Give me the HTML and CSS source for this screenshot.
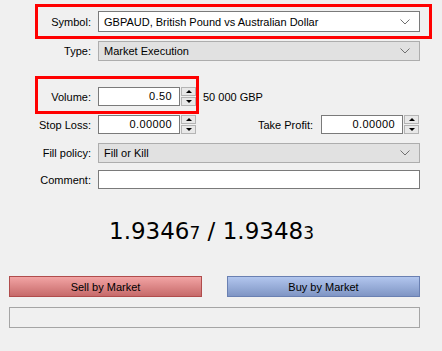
FILE: index.html
```html
<!DOCTYPE html>
<html lang="en">
<head>
  <meta charset="UTF-8" />
  <title>Order</title>
  <link rel="stylesheet" href="styles.css">
</head>
<body>

  <div class="order">
    <div class="row row-symbol mark">
      <label class="lbl">Symbol:</label>
      <div class="select white">
        <span>GBPAUD, British Pound vs Australian Dollar</span>
        <svg class="chev" width="10" height="6" viewBox="0 0 10 6"><polyline points="0.5,0.5 5,5 9.5,0.5" fill="none" stroke="#707070" stroke-width="1"/></svg>
      </div>
    </div>

    <div class="row row-type">
      <label class="lbl">Type:</label>
      <div class="select">
        <span>Market Execution</span>
        <svg class="chev" width="10" height="6" viewBox="0 0 10 6"><polyline points="0.5,0.5 5,5 9.5,0.5" fill="none" stroke="#707070" stroke-width="1"/></svg>
      </div>
    </div>

    <div class="row row-volume mark">
      <label class="lbl">Volume:</label>
      <div class="spin-field">
        <div class="num">0.50</div>
        <div class="spin"><span class="up"></span><span class="down"></span></div>
      </div>
      <span class="note">50 000 GBP</span>
    </div>

    <div class="row row-stops">
      <label class="lbl">Stop Loss:</label>
      <div class="stops">
        <div class="spin-field">
          <div class="num">0.00000</div>
          <div class="spin"><span class="up"></span><span class="down"></span></div>
        </div>
        <div class="tp">
          <label class="lbl-tp">Take Profit:</label>
          <div class="spin-field">
            <div class="num">0.00000</div>
            <div class="spin"><span class="up"></span><span class="down"></span></div>
          </div>
        </div>
      </div>
    </div>

    <div class="row row-fill">
      <label class="lbl">Fill policy:</label>
      <div class="select">
        <span>Fill or Kill</span>
        <svg class="chev" width="10" height="6" viewBox="0 0 10 6"><polyline points="0.5,0.5 5,5 9.5,0.5" fill="none" stroke="#707070" stroke-width="1"/></svg>
      </div>
    </div>

    <div class="row row-comment">
      <label class="lbl">Comment:</label>
      <div class="text-input"></div>
    </div>

    <div class="price">
      1.9346<small>7</small> / 1.9348<small>3</small>
    </div>

    <div class="actions">
      <button class="btn sell">Sell by Market</button>
      <button class="btn buy">Buy by Market</button>
    </div>

    <div class="status"></div>
  </div>

</body>
</html>
```

FILE: styles.css
```css
body {
  margin: 0;
  background: #f0f0f0;
  font-family: 'Liberation Sans', Arial, sans-serif;
  font-size: 11px;
  color: #000;
}

.order {
  padding: 11px 22px 0 9px;
}

.row {
  display: grid;
  grid-template-columns: 82px 1fr;
  column-gap: 7px;
  align-items: center;
  position: relative;
}

.lbl {
  text-align: right;
}

/* red highlight frames */
.mark::after {
  content: "";
  position: absolute;
  border: 3px solid #ff0000;
  pointer-events: none;
}

.row-symbol::after {
  left: 26px;
  right: -12px;
  top: -7px;
  bottom: -7px;
}

.row-volume::after {
  left: 26px;
  width: 158px;
  top: -11px;
  bottom: -8px;
}

.row-symbol { height: 21px; }
.row-type { height: 20px; margin-top: 9px; }
.row-volume { height: 19px; margin-top: 26px; grid-template-columns: 82px auto 1fr; }
.row-stops { height: 19px; margin-top: 9px; }
.row-fill { height: 20px; margin-top: 9px; }
.row-comment { height: 19px; margin-top: 7px; }

.select {
  box-sizing: border-box;
  height: 100%;
  display: flex;
  align-items: center;
  justify-content: space-between;
  padding: 0 9px 0 5px;
  background: #e1e1e1;
  border: 1px solid #adadad;
}

.select.white {
  background: #fff;
  border-color: #7a7a7a;
}

.chev {
  display: block;
}

.text-input {
  box-sizing: border-box;
  height: 100%;
  background: #fff;
  border: 1px solid #7a7a7a;
}

.spin-field {
  display: flex;
  height: 19px;
}

.num {
  box-sizing: border-box;
  width: 82px;
  height: 19px;
  background: #fff;
  border: 1px solid #7a7a7a;
  text-align: right;
  padding: 2px 7px 0 0;
  letter-spacing: 0.4px;
}

.spin {
  width: 15px;
  display: flex;
  flex-direction: column;
  justify-content: space-between;
  margin-left: 1px;
}

.spin span {
  box-sizing: border-box;
  height: 9px;
  background: #e8e8e8;
  border: 1px solid #b4b4b4;
  display: flex;
  align-items: center;
  justify-content: center;
}

.spin .up::before {
  content: "";
  border-left: 3px solid transparent;
  border-right: 3px solid transparent;
  border-bottom: 3px solid #000;
}

.spin .down::before {
  content: "";
  border-left: 3px solid transparent;
  border-right: 3px solid transparent;
  border-top: 3px solid #000;
}

.stops {
  display: flex;
  justify-content: space-between;
}

.tp {
  display: flex;
  align-items: center;
  gap: 8px;
  margin-right: 1px;
}

.price {
  margin-top: 29px;
  text-align: center;
  font-family: 'DejaVu Sans', sans-serif;
  font-size: 23px;
  line-height: 26px;
  padding-right: 6px;
}

.price small {
  font-size: 17px;
}

.actions {
  display: flex;
  justify-content: space-between;
  margin-top: 30px;
}

.btn {
  width: 193px;
  height: 21px;
  font-family: 'Liberation Sans', Arial, sans-serif;
  font-size: 11px;
  color: #000;
  padding: 0;
  cursor: pointer;
}

.sell {
  background: linear-gradient(#f2a4a4, #c66a6a);
  border: 1px solid #b04c4c;
}

.buy {
  background: linear-gradient(#b2c6ee, #7f95c4);
  border: 1px solid #6a80b2;
}

.status {
  box-sizing: border-box;
  height: 21px;
  margin-top: 10px;
  border: 1px solid #a5a5a5;
}
```
